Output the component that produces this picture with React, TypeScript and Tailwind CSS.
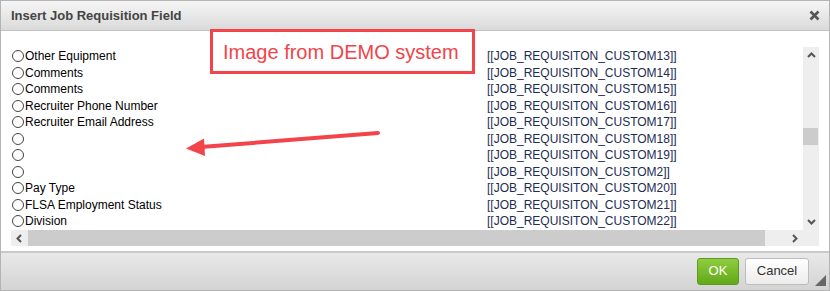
import React from 'react';

const rows: [string, string][] = [
  ['Other Equipment', '[[JOB_REQUISITON_CUSTOM13]]'],
  ['Comments', '[[JOB_REQUISITON_CUSTOM14]]'],
  ['Comments', '[[JOB_REQUISITON_CUSTOM15]]'],
  ['Recruiter Phone Number', '[[JOB_REQUISITON_CUSTOM16]]'],
  ['Recruiter Email Address', '[[JOB_REQUISITON_CUSTOM17]]'],
  ['', '[[JOB_REQUISITON_CUSTOM18]]'],
  ['', '[[JOB_REQUISITON_CUSTOM19]]'],
  ['', '[[JOB_REQUISITON_CUSTOM2]]'],
  ['Pay Type', '[[JOB_REQUISITON_CUSTOM20]]'],
  ['FLSA Employment Status', '[[JOB_REQUISITON_CUSTOM21]]'],
  ['Division', '[[JOB_REQUISITON_CUSTOM22]]'],
  ['', ''],
];

const Chevron = ({ dir }: { dir: 'up' | 'down' | 'left' | 'right' }) => {
  const pts = {
    up: '1,6 4.5,2.5 8,6',
    down: '1,3 4.5,6.5 8,3',
    left: '6,1 2.5,4.5 6,8',
    right: '3,1 6.5,4.5 3,8',
  }[dir];
  return (
    <svg width="9" height="9" viewBox="0 0 9 9">
      <polyline points={pts} fill="none" stroke="#555" strokeWidth="2" />
    </svg>
  );
};

export default function App() {
  return (
    <div className="relative w-[830px] h-[291px] flex flex-col border border-[#b4b4b4] bg-white font-['Liberation_Sans',Arial,sans-serif] overflow-hidden">
      {/* Header */}
      <div className="h-[30px] shrink-0 flex items-center justify-between pl-[10px] pr-[9px] border-b border-[#c2c2c2] bg-gradient-to-b from-[#f6f6f6] to-[#dadada]">
        <span className="text-[13px] font-bold text-[#444]">Insert Job Requisition Field</span>
        <svg width="11" height="11" viewBox="0 0 11 11">
          <path d="M1.5 1.5 L9.5 9.5 M9.5 1.5 L1.5 9.5" stroke="#555" strokeWidth="2.6" />
        </svg>
      </div>

      {/* Body */}
      <div className="h-[220px] shrink-0 px-[10px] pt-[16px]">
        <div className="flex flex-col w-[808px]">
          <div className="flex h-[183px]">
            <div className="flex-1 overflow-hidden pt-[1px]">
              {rows.map(([label, tag], i) => (
                <div key={i} className="grid grid-cols-[476px_auto] h-[16.5px] items-center text-[12px] leading-none">
                  <div className="flex items-center">
                    <span className="w-[12px] h-[12px] rounded-full border border-[#444] bg-white shrink-0 ml-[1px]" />
                    <span className="ml-[1px] text-black">{label}</span>
                  </div>
                  <span className="text-[#1c2d52] whitespace-nowrap">{tag}</span>
                </div>
              ))}
            </div>
            {/* vertical scrollbar */}
            <div className="w-[16px] bg-[#eeeeee] flex flex-col items-center">
              <div className="h-[17px] flex items-center justify-center">
                <Chevron dir="up" />
              </div>
              <div className="mt-[64px] w-[15px] self-start h-[17px] bg-[#cccccc]" />
              <div className="flex-1" />
              <div className="h-[17px] flex items-center justify-center">
                <Chevron dir="down" />
              </div>
            </div>
          </div>
          {/* horizontal scrollbar */}
          <div className="h-[16px] flex bg-[#eeeeee]">
            <div className="w-[17px] flex items-center justify-center">
              <Chevron dir="left" />
            </div>
            <div className="w-[737px] bg-[#cccccc]" />
            <div className="flex-1" />
            <div className="w-[17px] flex items-center justify-center">
              <Chevron dir="right" />
            </div>
            <div className="w-[16px]" />
          </div>
        </div>
      </div>

      {/* Footer */}
      <div className="flex-1 flex items-center justify-end gap-[6px] pr-[20px] pb-[1px] border-t-2 border-[#c9c9c9] bg-gradient-to-b from-[#e9e9e9] to-[#d3d3d3]">
        <button className="h-[27px] w-[42px] rounded-[3px] border border-[#5c9b1e] bg-gradient-to-b from-[#8fcd3e] to-[#62a818] text-white text-[13px]">
          OK
        </button>
        <button className="h-[27px] w-[64px] rounded-[3px] border border-[#bdbdbd] bg-gradient-to-b from-white to-[#ececec] text-[#333] text-[13px]">
          Cancel
        </button>
      </div>

      {/* resize grip */}
      <svg className="absolute right-[3px] bottom-[4px]" width="11" height="11" viewBox="0 0 11 11">
        <polygon points="11,0 11,11 0,11" fill="#666" />
      </svg>

      {/* annotation */}
      <div className="absolute left-[209px] top-[28px] w-[265px] h-[45px] border-[3px] border-[#f2444a] flex items-center pl-[10px]">
        <span className="text-[20px] text-[#f2444a] leading-none">Image from DEMO system</span>
      </div>
      <svg className="absolute left-0 top-0 pointer-events-none" width="830" height="291">
        <line x1="377" y1="132" x2="200" y2="146" stroke="#f2444a" strokeWidth="4" strokeLinecap="round" />
        <polygon points="185,147.5 203,137.5 204,155" fill="#f2444a" />
      </svg>
    </div>
  );
}
